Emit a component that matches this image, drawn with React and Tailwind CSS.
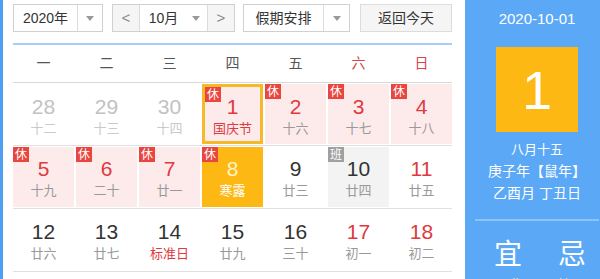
import React from "react";

const FONT = { fontFamily: '"Liberation Sans", "Noto Sans CJK SC", sans-serif' };

function Tri() {
  return (
    <svg width="8" height="5" viewBox="0 0 8 5">
      <path d="M0 0 L8 0 L4 5 Z" fill="#999" />
    </svg>
  );
}

const rows = [
  [
    { n: "28", l: "十二", t: "prev" },
    { n: "29", l: "十三", t: "prev" },
    { n: "30", l: "十四", t: "prev" },
    { n: "1", l: "国庆节", t: "holiday", sel: true, fest: true },
    { n: "2", l: "十六", t: "holiday" },
    { n: "3", l: "十七", t: "holiday" },
    { n: "4", l: "十八", t: "holiday" },
  ],
  [
    { n: "5", l: "十九", t: "holiday" },
    { n: "6", l: "二十", t: "holiday" },
    { n: "7", l: "廿一", t: "holiday" },
    { n: "8", l: "寒露", t: "today" },
    { n: "9", l: "廿三", t: "normal" },
    { n: "10", l: "廿四", t: "work" },
    { n: "11", l: "廿五", t: "weekend" },
  ],
  [
    { n: "12", l: "廿六", t: "normal" },
    { n: "13", l: "廿七", t: "normal" },
    { n: "14", l: "标准日", t: "normal", fest: true },
    { n: "15", l: "廿九", t: "normal" },
    { n: "16", l: "三十", t: "normal" },
    { n: "17", l: "初一", t: "weekend" },
    { n: "18", l: "初二", t: "weekend" },
  ],
];

function Cell({ d, first }) {
  let bg = "bg-white";
  let num = "text-[#333]";
  let lun = d.fest ? "text-[#e0393e]" : "text-[#999]";
  let badge = null;
  if (d.t === "prev") {
    num = "text-[#c2c2c2]";
    lun = "text-[#cacaca]";
  } else if (d.t === "holiday") {
    bg = "bg-[#fdebec]";
    num = "text-[#e0393e]";
    badge = <span className="absolute left-0 top-0 flex h-[15px] w-[16px] items-center justify-center bg-[#e9463f] text-[12px] leading-none text-white">休</span>;
  } else if (d.t === "today") {
    bg = "bg-[#fdb813]";
    num = "text-[#fff3c8]";
    lun = "text-white";
    badge = <span className="absolute left-0 top-0 flex h-[15px] w-[16px] items-center justify-center bg-[#e9463f] text-[12px] leading-none text-white">休</span>;
  } else if (d.t === "work") {
    bg = "bg-[#f3f3f3]";
    badge = <span className="absolute left-0 top-0 flex h-[15px] w-[16px] items-center justify-center bg-[#a0a0a0] text-[12px] leading-none text-white">班</span>;
  } else if (d.t === "weekend") {
    num = "text-[#e0393e]";
  }
  const pt = d.sel ? "pt-[7px]" : first ? "pt-[10px]" : "pt-[9px]";
  return (
    <div className={`relative flex h-full flex-col items-center ${bg} ${d.sel ? "border-[3px] border-[#f5b92a]" : ""}`}>
      {badge}
      <div className={`flex h-full flex-col items-center ${pt}`}>
        <span className={`text-[21px] leading-[26px] ${num}`}>{d.n}</span>
        <span className={`text-[13px] leading-[18px] ${lun}`}>{d.l}</span>
      </div>
    </div>
  );
}

export default function App() {
  const week = ["一", "二", "三", "四", "五", "六", "日"];
  return (
    <div className="flex h-[279px] w-[600px] overflow-hidden bg-white" style={FONT}>
      <div className="h-full w-[3px] shrink-0 bg-[#4fa0f2]" />
      <div className="flex w-[462px] shrink-0 flex-col pl-[10px] pr-[13px] pt-[4px]">
        <div className="flex h-[28px] shrink-0 items-stretch text-[14px] text-[#333]">
          <div className="flex w-[90px] border border-[#d0d0d0] bg-white">
            <div className="flex w-[63px] items-center justify-center">2020年</div>
            <div className="flex flex-1 items-center justify-center border-l border-[#dcdcdc]"><Tri /></div>
          </div>
          <div className="ml-[9px] flex w-[123px] border border-[#d0d0d0] bg-white">
            <div className="flex w-[27px] items-center justify-center border-r border-[#dcdcdc] bg-[#f5f5f5] text-[15px] text-[#888]">&lt;</div>
            <div className="flex flex-1 items-center justify-center gap-[14px] pl-[2px]">
              <span>10月</span>
              <Tri />
            </div>
            <div className="flex w-[27px] items-center justify-center border-l border-[#dcdcdc] bg-[#f5f5f5] text-[15px] text-[#888]">&gt;</div>
          </div>
          <div className="ml-[8px] flex w-[107px] border border-[#d0d0d0] bg-white">
            <div className="flex w-[79px] items-center justify-center">假期安排</div>
            <div className="flex flex-1 items-center justify-center border-l border-[#dcdcdc]"><Tri /></div>
          </div>
          <div className="ml-[10px] flex w-[92px] items-center justify-center border border-[#dcdcdc] bg-[#f5f5f5]">返回今天</div>
        </div>
        <div className="mt-[11px] h-[2px] shrink-0 bg-[#a8cdf3]" />
        <div className="grid h-[38px] shrink-0 grid-cols-7 gap-[2px] border-b border-[#d8d8d8] text-[14px]">
          {week.map((w, i) => (
            <div key={w} className={`flex items-center justify-center ${i >= 5 ? "text-[#d9454a]" : "text-[#555]"}`}>{w}</div>
          ))}
        </div>
        {rows.map((r, i) => (
          <div key={i} className="grid h-[63px] shrink-0 grid-cols-7 gap-[2px] border-b border-[#e0e0e0] pb-[1px] pt-[1px]">
            {r.map((d) => (
              <Cell key={d.n} d={d} first={i === 0} />
            ))}
          </div>
        ))}
      </div>
      <div className="flex w-[144px] shrink-0 flex-col items-center bg-[#5aa8f6] text-white">
        <div className="mt-[9px] shrink-0 text-[15px] leading-[20px]">2020-10-01</div>
        <div className="mt-[18px] flex h-[85px] w-[82px] shrink-0 items-center justify-center bg-[#fdb813] text-[54px] leading-none">1</div>
        <div className="mt-[8px] shrink-0 text-[13px] leading-[20px]">八月十五</div>
        <div className="shrink-0 text-[14px] leading-[22px]">庚子年【鼠年】</div>
        <div className="shrink-0 text-[14px] leading-[22px]">乙酉月 丁丑日</div>
        <div className="mt-[15px] h-[2px] w-[124px] shrink-0 bg-[#8cc3f8]" />
        <div className="mt-[18px] flex w-full shrink-0 justify-center gap-[36px] pl-[6px] text-[28px] leading-[32px]">
          <span>宜</span>
          <span>忌</span>
        </div>
        <div className="mt-[6px] flex w-full shrink-0 justify-center gap-[36px] pl-[6px] text-[13px] leading-[16px]">
          <span>开业</span>
          <span>嫁娶</span>
        </div>
      </div>
    </div>
  );
}
